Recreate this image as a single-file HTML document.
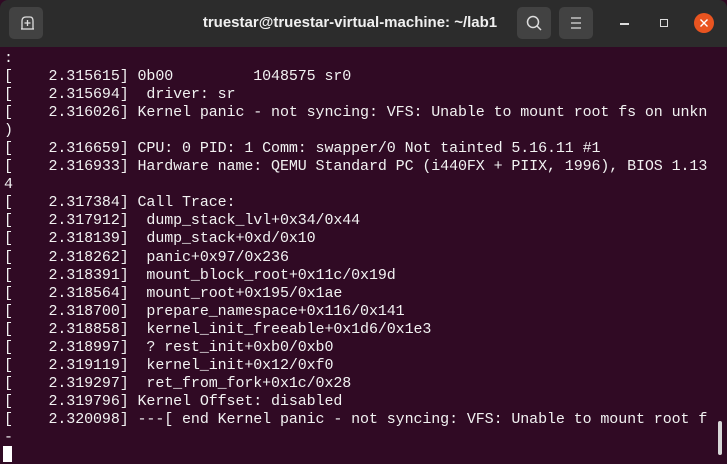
<!DOCTYPE html>
<html><head><meta charset="utf-8"><style>
html,body{margin:0;padding:0;width:727px;height:464px;overflow:hidden;background:#300a24}
.tb{position:absolute;left:0;top:0;width:727px;height:47px;background:#2c2c2c;border-radius:8px 8px 0 0}
.btn{position:absolute;top:7px;width:34px;height:32px;background:#424242;border-radius:5px}
.title{position:absolute;left:200px;width:300px;top:14px;text-align:center;color:#f0f0f0;font:bold 15px "Liberation Sans",sans-serif;}
.term{position:absolute;left:4px;top:50px;color:#f2f2f2;font:15px/18.05px "Liberation Mono",monospace;letter-spacing:-0.1px;white-space:pre}
.cur{position:absolute;left:3px;top:446px;width:9px;height:16px;background:#fff}
.sb{position:absolute;left:718px;top:421px;width:4px;height:34px;background:#d8d8d8;border-radius:2px}
</style></head><body>
<div class="tb">
<div class="btn" style="left:9px"><svg width="34" height="32"><path d="M13 22V14Q13 10 17 10H21Q24 10 24 14V22" fill="none" stroke="#ddd" stroke-width="1.3"/><path d="M18.5 13v6M15.5 16h6" stroke="#ddd" stroke-width="1.3"/><path d="M12 22h13" stroke="#ddd" stroke-width="1.3"/></svg></div>
<div class="title">truestar@truestar-virtual-machine: ~/lab1</div>
<div class="btn" style="left:517px"><svg width="34" height="32"><circle cx="16" cy="15" r="5.5" fill="none" stroke="#ddd" stroke-width="1.5"/><path d="M20 19l4 4" stroke="#ddd" stroke-width="1.5"/></svg></div>
<div class="btn" style="left:559px"><svg width="34" height="32"><path d="M12 11h10M12 16h10M12 21h10" stroke="#ddd" stroke-width="1.3"/></svg></div>
<div style="position:absolute;left:620px;top:23px;width:9px;height:1.5px;background:#ddd"></div>
<div style="position:absolute;left:660px;top:19px;width:6px;height:6px;border:1.3px solid #ddd"></div>
<div style="position:absolute;left:694px;top:13px;width:20px;height:20px;border-radius:50%;background:#e95420"><svg width="20" height="20"><path d="M6.5 6.5l7 7M13.5 6.5l-7 7" stroke="#fff" stroke-width="1.4"/></svg></div>
</div>
<div class="term">:
[    2.315615] 0b00         1048575 sr0
[    2.315694]  driver: sr
[    2.316026] Kernel panic - not syncing: VFS: Unable to mount root fs on unkn
)
[    2.316659] CPU: 0 PID: 1 Comm: swapper/0 Not tainted 5.16.11 #1
[    2.316933] Hardware name: QEMU Standard PC (i440FX + PIIX, 1996), BIOS 1.13
4
[    2.317384] Call Trace:
[    2.317912]  dump_stack_lvl+0x34/0x44
[    2.318139]  dump_stack+0xd/0x10
[    2.318262]  panic+0x97/0x236
[    2.318391]  mount_block_root+0x11c/0x19d
[    2.318564]  mount_root+0x195/0x1ae
[    2.318700]  prepare_namespace+0x116/0x141
[    2.318858]  kernel_init_freeable+0x1d6/0x1e3
[    2.318997]  ? rest_init+0xb0/0xb0
[    2.319119]  kernel_init+0x12/0xf0
[    2.319297]  ret_from_fork+0x1c/0x28
[    2.319796] Kernel Offset: disabled
[    2.320098] ---[ end Kernel panic - not syncing: VFS: Unable to mount root f
-</div>
<div class="cur"></div>
<div class="sb"></div>
</body></html>
